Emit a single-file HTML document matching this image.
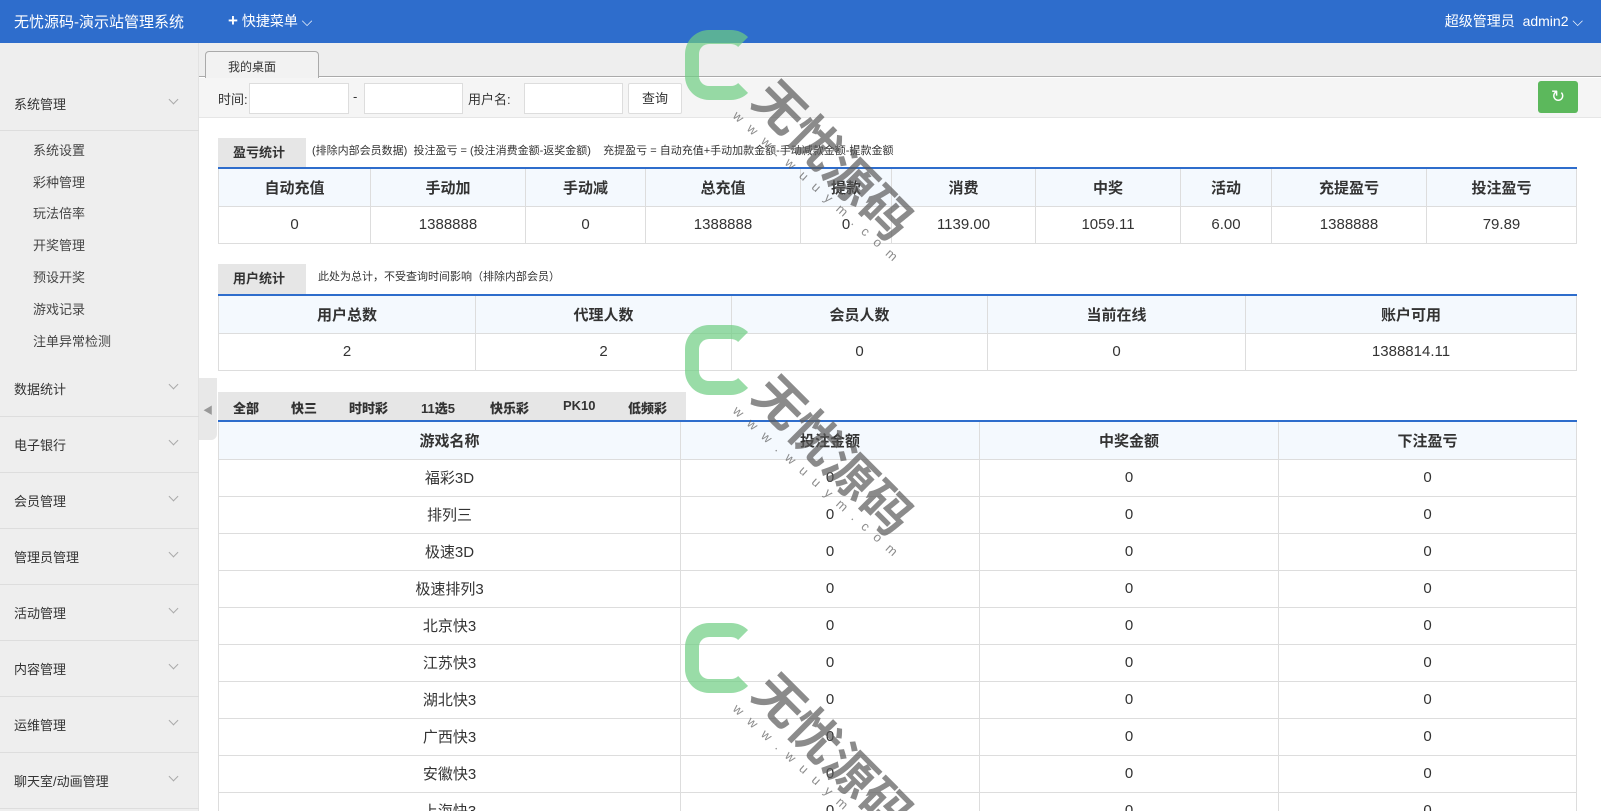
<!DOCTYPE html>
<html style="overflow:hidden;height:811px"><head><meta charset="utf-8"><style>
*{margin:0;padding:0;box-sizing:border-box}
body{width:1601px;height:811px;overflow:hidden;position:relative;background:#fff;font-family:"Liberation Sans","Noto Sans CJK SC",sans-serif;color:#333}
.hd{position:absolute;left:0;top:0;width:1601px;height:43px;background:#2e6dcc;color:#fff}
.hd .t{position:absolute;left:14px;top:11px;font-size:15px}
.hd .q{position:absolute;left:228px;top:11px;font-size:14px}
.hd .u{position:absolute;right:18px;top:11px;font-size:14px}
.sb{position:absolute;left:0;top:43px;width:199px;height:768px;background:#eeeeee;border-right:1px solid #e2e2e2}
.sb .g{position:absolute;left:14px;font-size:13px;color:#333}
.sb .s{position:absolute;left:33px;font-size:13px;color:#444}
.sb .ln{position:absolute;left:0;width:199px;height:1px;background:#ddd}
.sb .ar{position:absolute;left:170px;width:7px;height:7px;border-right:1px solid #aaa;border-bottom:1px solid #aaa;transform:rotate(45deg)}
.tb{position:absolute;left:199px;top:43px;width:1402px;height:34px;background:#eeeeee;border-bottom:1px solid #aaa}
.tab{position:absolute;left:205px;top:51px;width:114px;height:27px;background:#f2f2f2;border:1px solid #aaa;border-bottom:none;border-radius:4px 4px 0 0;font-size:12px;padding:6px 0 0 22px}
.tool{position:absolute;left:199px;top:78px;width:1402px;height:40px;background:#f5f5f5;border-bottom:1px solid #e6e6e6;font-size:13px}
.tool input{position:absolute;top:5px;height:31px;border:1px solid #ddd;background:#fff}
.tool span{position:absolute;top:11px}
.btn{position:absolute;left:429px;top:5px;width:54px;height:31px;border:1px solid #ddd;background:#fff;border-radius:2px;text-align:center;line-height:30px;font-size:13px}
.gb{position:absolute;left:1339px;top:3px;width:40px;height:32px;background:#5cb85c;border-radius:3px;color:#fff;text-align:center;line-height:32px;font-size:17px}
.lab{position:absolute;background:#e6e6e6;font-size:13px;font-weight:bold;padding-left:15px;line-height:30px}
.note{position:absolute;font-size:11px;color:#333}
table{position:absolute;border-collapse:collapse;table-layout:fixed;border-top:2px solid #2e6dcc}
td,th{border:1px solid #ddd;text-align:center;font-size:15px;color:#333}
th{background:#f4f9fe;font-weight:bold;color:#333}
.gt{position:absolute;left:218px;top:392px;width:468px;height:28px;background:#e6e6e6;font-size:13px;font-weight:bold}
.gt b{position:absolute;top:6px}
.wm{position:absolute;pointer-events:none}
.gs{width:70px;height:70px;border:14px solid rgba(110,205,130,.7);border-right-color:transparent;border-radius:24px}
.wt{transform:rotate(45deg);transform-origin:left top;font-size:50px;font-weight:bold;color:rgba(90,90,90,.7);white-space:nowrap}
.ww{transform:rotate(42deg);transform-origin:left top;font-size:13px;color:rgba(90,90,90,.7);letter-spacing:3px;white-space:nowrap}
</style></head><body>
<div class="hd"><div class="t">无忧源码-演示站管理系统</div><div class="q"><b style="font-size:17px">+</b> 快捷菜单 ⌵</div><div class="u">超级管理员 &nbsp;admin2 ⌵</div></div>
<div class="sb">
<div class="g" style="top:51px">系统管理</div><div class="ar" style="top:53px"></div><div class="ln" style="top:87px"></div>
<div class="s" style="top:97px">系统设置</div><div class="s" style="top:129px">彩种管理</div><div class="s" style="top:160px">玩法倍率</div><div class="s" style="top:192px">开奖管理</div><div class="s" style="top:224px">预设开奖</div><div class="s" style="top:256px">游戏记录</div><div class="s" style="top:288px">注单异常检测</div>
<div class="g" style="top:336px">数据统计</div><div class="ar" style="top:338px"></div><div class="ln" style="top:373px"></div>
<div class="g" style="top:392px">电子银行</div><div class="ar" style="top:394px"></div><div class="ln" style="top:429px"></div>
<div class="g" style="top:448px">会员管理</div><div class="ar" style="top:450px"></div><div class="ln" style="top:485px"></div>
<div class="g" style="top:504px">管理员管理</div><div class="ar" style="top:506px"></div><div class="ln" style="top:541px"></div>
<div class="g" style="top:560px">活动管理</div><div class="ar" style="top:562px"></div><div class="ln" style="top:597px"></div>
<div class="g" style="top:616px">内容管理</div><div class="ar" style="top:618px"></div><div class="ln" style="top:653px"></div>
<div class="g" style="top:672px">运维管理</div><div class="ar" style="top:674px"></div><div class="ln" style="top:709px"></div>
<div class="g" style="top:728px">聊天室/动画管理</div><div class="ar" style="top:730px"></div><div class="ln" style="top:765px"></div>
</div>
<div style="position:absolute;left:199px;top:378px;width:18px;height:62px;background:#e8e8e8;border-radius:0 0 6px 0;color:#999;font-size:10px;padding:24px 0 0 4px">◀</div>
<div class="tb"></div>
<div class="tab">我的桌面</div>
<div class="tool"><span style="left:19px">时间:</span><input style="left:50px;width:100px"><span style="left:154px">-</span><input style="left:165px;width:99px"><span style="left:269px">用户名:</span><input style="left:325px;width:99px"><div class="btn">查询</div><div class="gb">↻</div></div>
<div class="lab" style="left:218px;top:138px;width:88px;height:29px">盈亏统计</div>
<div class="note" style="left:312px;top:142px">(排除内部会员数据) &nbsp;投注盈亏 = (投注消费金额-返奖金额) &nbsp;&nbsp;&nbsp;充提盈亏 = 自动充值+手动加款金额-手动减款金额-提款金额</div>
<table style="left:218px;top:167px;width:1359px"><colgroup><col style="width:152px"><col style="width:155px"><col style="width:120px"><col style="width:155px"><col style="width:91px"><col style="width:144px"><col style="width:145px"><col style="width:91px"><col style="width:155px"><col></colgroup>
<tr style="height:38px"><th>自动充值</th><th>手动加</th><th>手动减</th><th>总充值</th><th>提款</th><th>消费</th><th>中奖</th><th>活动</th><th>充提盈亏</th><th>投注盈亏</th></tr>
<tr style="height:37px"><td>0</td><td>1388888</td><td>0</td><td>1388888</td><td>0</td><td>1139.00</td><td>1059.11</td><td>6.00</td><td>1388888</td><td>79.89</td></tr></table>
<div class="lab" style="left:218px;top:264px;width:88px;height:30px">用户统计</div>
<div class="note" style="left:318px;top:268px">此处为总计，不受查询时间影响（排除内部会员）</div>
<table style="left:218px;top:294px;width:1359px"><colgroup><col style="width:257px"><col style="width:256px"><col style="width:256px"><col style="width:258px"><col></colgroup>
<tr style="height:38px"><th>用户总数</th><th>代理人数</th><th>会员人数</th><th>当前在线</th><th>账户可用</th></tr>
<tr style="height:37px"><td>2</td><td>2</td><td>0</td><td>0</td><td>1388814.11</td></tr></table>
<div class="gt"><b style="left:15px">全部</b><b style="left:73px">快三</b><b style="left:131px">时时彩</b><b style="left:203px">11选5</b><b style="left:272px">快乐彩</b><b style="left:345px">PK10</b><b style="left:410px">低频彩</b></div>
<table style="left:218px;top:420px;width:1359px"><colgroup><col style="width:462px"><col style="width:299px"><col style="width:299px"><col></colgroup>
<tr style="height:38px"><th>游戏名称</th><th>投注金额</th><th>中奖金额</th><th>下注盈亏</th></tr>
<tr style="height:37px"><td>福彩3D</td><td>0</td><td>0</td><td>0</td></tr>
<tr style="height:37px"><td>排列三</td><td>0</td><td>0</td><td>0</td></tr>
<tr style="height:37px"><td>极速3D</td><td>0</td><td>0</td><td>0</td></tr>
<tr style="height:37px"><td>极速排列3</td><td>0</td><td>0</td><td>0</td></tr>
<tr style="height:37px"><td>北京快3</td><td>0</td><td>0</td><td>0</td></tr>
<tr style="height:37px"><td>江苏快3</td><td>0</td><td>0</td><td>0</td></tr>
<tr style="height:37px"><td>湖北快3</td><td>0</td><td>0</td><td>0</td></tr>
<tr style="height:37px"><td>广西快3</td><td>0</td><td>0</td><td>0</td></tr>
<tr style="height:37px"><td>安徽快3</td><td>0</td><td>0</td><td>0</td></tr>
<tr style="height:37px"><td>上海快3</td><td>0</td><td>0</td><td>0</td></tr></table>
<div class="wm gs" style="left:685px;top:30px"></div>
<div class="wm wt" style="left:790px;top:62px">无忧源码</div>
<div class="wm ww" style="left:740px;top:108px">w w w . w u u y m . c o m</div>
<div class="wm gs" style="left:685px;top:325px"></div>
<div class="wm wt" style="left:790px;top:357px">无忧源码</div>
<div class="wm ww" style="left:740px;top:403px">w w w . w u u y m . c o m</div>
<div class="wm gs" style="left:685px;top:623px"></div>
<div class="wm wt" style="left:790px;top:655px">无忧源码</div>
<div class="wm ww" style="left:740px;top:701px">w w w . w u u y m . c o m</div>
</body></html>
